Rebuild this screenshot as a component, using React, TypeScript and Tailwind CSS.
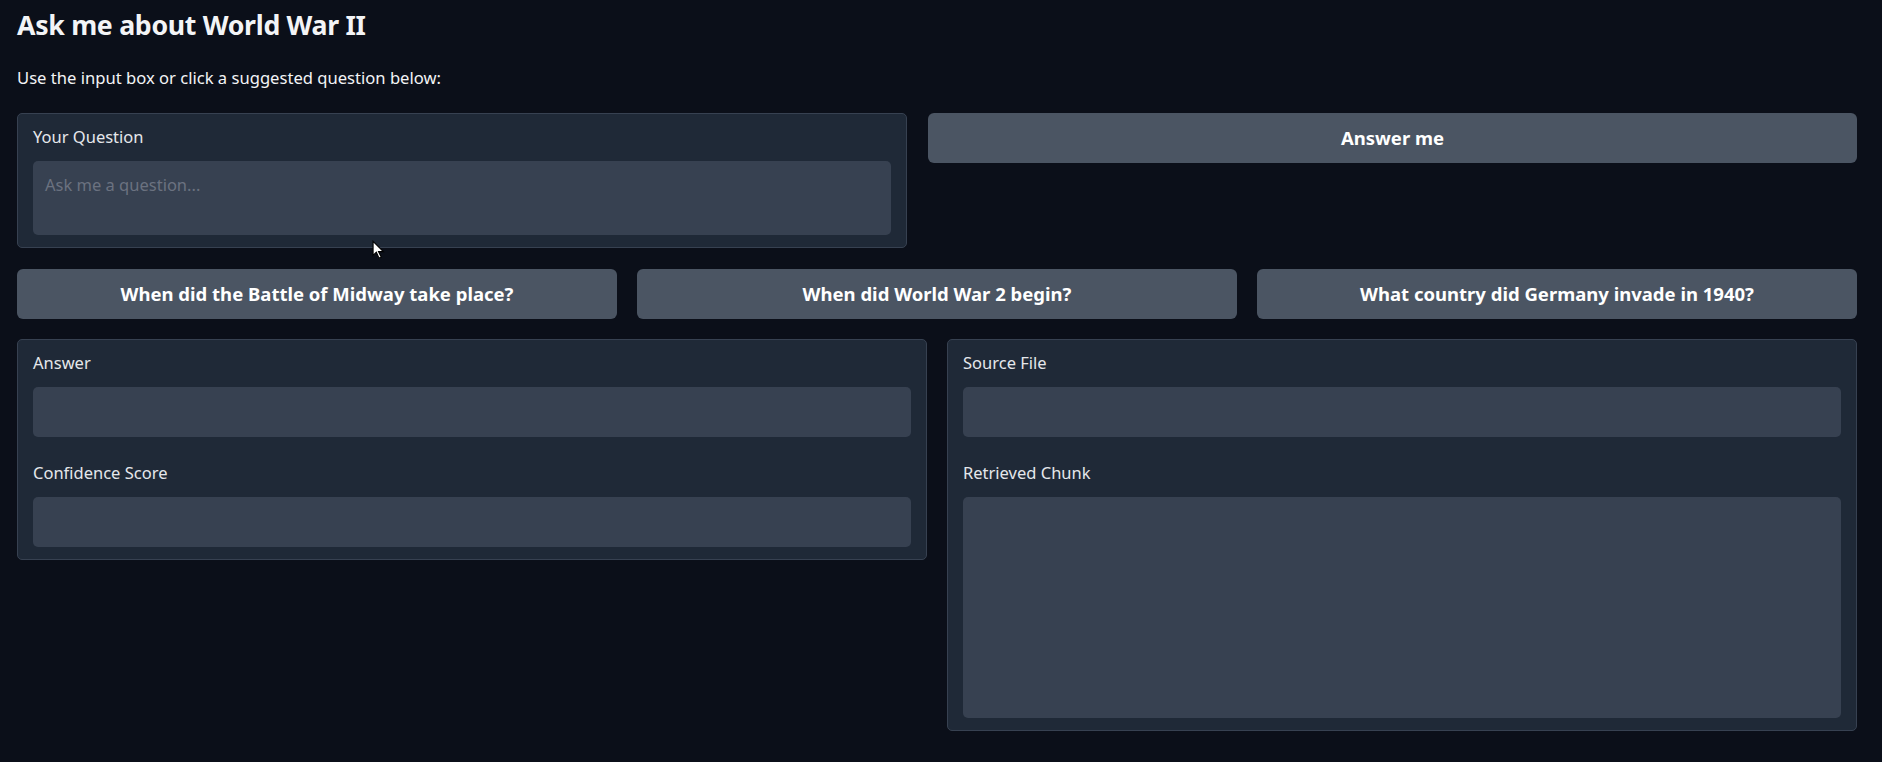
import type { ReactNode } from "react";

const suggestions = [
  "When did the Battle of Midway take place?",
  "When did World War 2 begin?",
  "What country did Germany invade in 1940?",
];

function Panel({ children, className = "" }: { children: ReactNode; className?: string }) {
  return (
    <div className={`rounded-[5px] border border-[#374151] bg-[#1f2937] px-[15px] pt-[11px] pb-[12px] ${className}`}>
      {children}
    </div>
  );
}

function Field({ label, height, placeholder, first }: { label: string; height: string; placeholder?: string; first?: boolean }) {
  return (
    <div className={first ? "" : "mt-[24px]"}>
      <div className="text-[16.5px] leading-[24px] text-[#e5e7eb]">{label}</div>
      <div className={`mt-[12px] rounded-[5px] bg-[#374151] px-[12px] pt-[12px] text-[16.5px] leading-[24px] text-[#6b7280] ${height}`}>
        {placeholder}
      </div>
    </div>
  );
}

export default function App() {
  return (
    <div className="relative min-h-screen bg-[#0b0f19] pl-[17px] pr-[25px] pt-[7px] font-['Noto_Sans',sans-serif] text-[#f3f4f6]">
      <h1 className="text-[26.7px] leading-[35px] font-bold tracking-[-0.3px]">Ask me about World War II</h1>
      <p className="mt-[24px] text-[16.6px] leading-[24px]">Use the input box or click a suggested question below:</p>

      <div className="mt-[23px] flex items-start gap-[21px]">
        <Panel className="w-[890px] shrink-0">
          <Field label="Your Question" height="h-[74px]" placeholder="Ask me a question..." first />
        </Panel>
        <button className="h-[50px] flex-1 rounded-[6px] bg-[#4b5563] text-[18.5px] font-bold text-white">Answer me</button>
      </div>

      <div className="mt-[21px] grid grid-cols-3 gap-[20px]">
        {suggestions.map((q) => (
          <button key={q} className="h-[50px] rounded-[6px] bg-[#4b5563] text-[18.5px] font-bold text-white">
            {q}
          </button>
        ))}
      </div>

      <div className="mt-[20px] grid grid-cols-2 items-start gap-[20px]">
        <Panel>
          <Field label="Answer" height="h-[50px]" first />
          <Field label="Confidence Score" height="h-[50px]" />
        </Panel>
        <Panel>
          <Field label="Source File" height="h-[50px]" first />
          <Field label="Retrieved Chunk" height="h-[221px]" />
        </Panel>
      </div>

      {/* mouse pointer from the screenshot */}
      <svg className="absolute left-[372px] top-[240px]" width="13" height="20" viewBox="0 0 12 18" aria-hidden="true">
        <path d="M1 1 L1 14 L4 11 L6.5 16.5 L8.5 15.5 L6 10.5 L10.5 10.5 Z" fill="#fff" stroke="#000" strokeWidth="1" />
      </svg>
    </div>
  );
}
